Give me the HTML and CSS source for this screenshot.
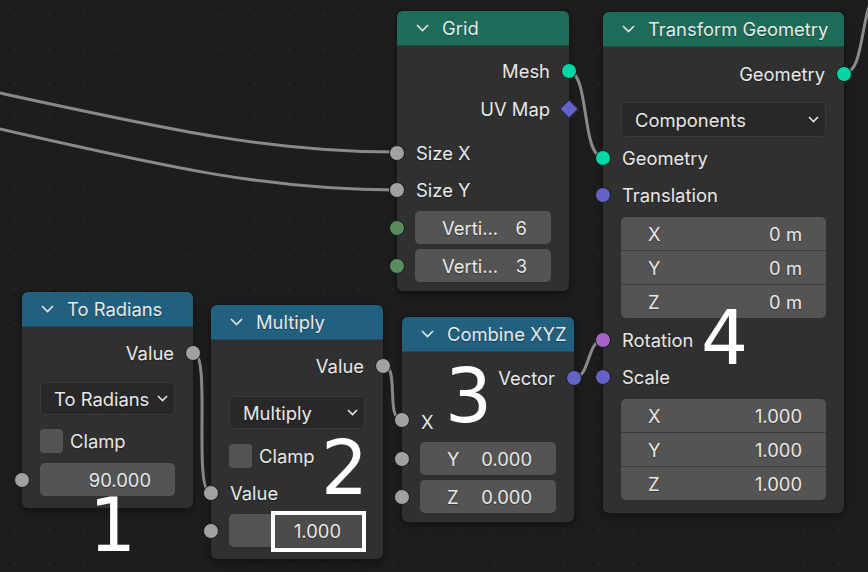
FILE: index.html
```html
<!DOCTYPE html>
<html>
<head>
<meta charset="utf-8">
<link rel="stylesheet" href="styles.css">
</head>
<body>
<div class="canvas">
  <svg class="wires" viewBox="0 0 868 572" width="868" height="572">
    <path d="M0 93 C170 130 270 152 396 152"/>
    <path d="M0 129 C170 168 270 190 396 190"/>
    <path d="M568 71 C590 71 581 157 603 157"/>
    <path d="M844 73 C866 73 858 10 880 -15"/>
    <path d="M193 352 C212 352 192 493 211 493"/>
    <path d="M383 365 C400 365 385 420 402 420"/>
    <path d="M574 378 C590 378 587 340 603 340"/>
  </svg>

  <!-- Grid -->
  <div class="node n-grid">
    <div class="hdr teal"><svg class="chev" viewBox="0 0 13 8"><polyline points="1,1 6.5,6.5 12,1"/></svg><span>Grid</span></div>
    <div class="body pt6 pb9">
      <div class="row out">Mesh<span class="sock geo"></span></div>
      <div class="row out mt1">UV Map<span class="diamond"></span></div>
      <div class="row in mt7"><span class="sock flt"></span>Size X</div>
      <div class="row in"><span class="sock flt"></span>Size Y</div>
      <div class="field mt3"><span class="sock int"></span><span>Verti...</span><span>6</span></div>
      <div class="field mt5"><span class="sock int"></span><span>Verti...</span><span>3</span></div>
    </div>
  </div>

  <!-- Transform Geometry -->
  <div class="node n-xform">
    <div class="hdr teal"><svg class="chev" viewBox="0 0 13 8"><polyline points="1,1 6.5,6.5 12,1"/></svg><span>Transform Geometry</span></div>
    <div class="body pt8 pb13">
      <div class="row out">Geometry<span class="sock geo"></span></div>
      <div class="dd tall mt10"><span>Components</span><svg class="ddchev" viewBox="0 0 11 7"><polyline points="1,1 5.5,5.5 10,1"/></svg></div>
      <div class="row in mt2"><span class="sock geo"></span>Geometry</div>
      <div class="row in"><span class="sock vec"></span>Translation</div>
      <div class="vbox mt4">
        <div class="vr"><span>X</span><span>0 m</span></div>
        <div class="vr"><span>Y</span><span>0 m</span></div>
        <div class="vr"><span>Z</span><span>0 m</span></div>
      </div>
      <div class="row in mt3"><span class="sock rot"></span>Rotation</div>
      <div class="row in"><span class="sock vec"></span>Scale</div>
      <div class="vbox mt4">
        <div class="vr"><span>X</span><span>1.000</span></div>
        <div class="vr"><span>Y</span><span>1.000</span></div>
        <div class="vr"><span>Z</span><span>1.000</span></div>
      </div>
    </div>
  </div>

  <!-- To Radians -->
  <div class="node n-rad">
    <div class="hdr blue"><svg class="chev" viewBox="0 0 13 8"><polyline points="1,1 6.5,6.5 12,1"/></svg><span>To Radians</span></div>
    <div class="body pt7 pb12">
      <div class="row out">Value<span class="sock flt"></span></div>
      <div class="dd mt11"><span>To Radians</span><svg class="ddchev" viewBox="0 0 11 7"><polyline points="1,1 5.5,5.5 10,1"/></svg></div>
      <div class="chk mt7"><span class="box"></span><span>Clamp</span></div>
      <div class="field right mt4"><span class="sock flt"></span><span>90.000</span></div>
    </div>
  </div>

  <!-- Multiply -->
  <div class="node n-mul">
    <div class="hdr blue"><svg class="chev" viewBox="0 0 13 8"><polyline points="1,1 6.5,6.5 12,1"/></svg><span>Multiply</span></div>
    <div class="body pt7 pb12">
      <div class="row out">Value<span class="sock flt"></span></div>
      <div class="dd mt12"><span>Multiply</span><svg class="ddchev" viewBox="0 0 11 7"><polyline points="1,1 5.5,5.5 10,1"/></svg></div>
      <div class="chk mt8"><span class="box"></span><span>Clamp</span></div>
      <div class="row in"><span class="sock flt"></span>Value</div>
      <div class="field right mt3"><span class="sock flt"></span><span class="hl"></span><span class="val">1.000</span></div>
    </div>
  </div>

  <!-- Combine XYZ -->
  <div class="node n-comb">
    <div class="hdr blue"><svg class="chev" viewBox="0 0 13 8"><polyline points="1,1 6.5,6.5 12,1"/></svg><span>Combine XYZ</span></div>
    <div class="body pt7 pb9">
      <div class="row out">Vector<span class="sock vec"></span></div>
      <div class="row in low mt5"><span class="sock flt"></span>X</div>
      <div class="field mt4"><span class="sock flt"></span><span>Y</span><span>0.000</span></div>
      <div class="field mt5"><span class="sock flt"></span><span>Z</span><span>0.000</span></div>
    </div>
  </div>

  <div class="num n1">1</div>
  <div class="num n2">2</div>
  <div class="num n3">3</div>
  <div class="num n4">4</div>
</div>
</body>
</html>
```

FILE: styles.css
```css
* { box-sizing: border-box; margin: 0; padding: 0; }
html, body { width: 868px; height: 572px; overflow: hidden; }
body {
  background: #1d1d1d;
  font-family: Inter, "DejaVu Sans", sans-serif;
  font-size: 18.4px;
  color: #e8e8e8;
}
.canvas {
  position: relative;
  width: 868px;
  height: 572px;
  overflow: hidden;
  background-color: #1d1d1d;
  background-image: radial-gradient(circle, #2a2a2a 0.8px, transparent 1.3px);
  background-size: 34.33px 34.33px;
  background-position: -2.2px -2.2px;
}
.wires { position: absolute; left: 0; top: 0; }
.wires path { fill: none; stroke: #8a8a8a; stroke-width: 3; stroke-linecap: round; }

.node {
  position: absolute;
  background: #303030;
  border-radius: 6px;
  box-shadow: 0 0 0 1px #161616, 0 3px 8px rgba(0, 0, 0, 0.45);
  text-shadow: 0 1px 1px rgba(0, 0, 0, 0.35);
}
.n-grid { left: 397px; top: 11px; width: 172px; }
.n-xform { left: 603px; top: 12px; width: 241px; }
.n-rad { left: 22px; top: 292px; width: 171px; }
.n-mul { left: 211px; top: 305px; width: 172px; }
.n-comb { left: 402px; top: 317px; width: 172px; }

.hdr {
  height: 35px;
  display: flex;
  align-items: center;
  gap: 13px;
  padding-left: 19px;
  border-radius: 6px 6px 0 0;
  border-bottom: 1px solid rgba(0, 0, 0, 0.22);
  white-space: nowrap;
}
.hdr.teal { background: #1d6b58; }
.hdr.blue { background: #21607f; }
.chev { width: 13px; height: 8px; flex: none; }
.chev polyline, .ddchev polyline { fill: none; stroke: #e6e6e6; stroke-width: 1.6; }

.body { padding-left: 18px; padding-right: 18px; display: flex; flex-direction: column; }
.pt6 { padding-top: 6px; } .pt7 { padding-top: 7px; } .pt8 { padding-top: 8px; }
.pb9 { padding-bottom: 9px; } .pb12 { padding-bottom: 12px; } .pb13 { padding-bottom: 13px; }
.mt1 { margin-top: 1px; } .mt2 { margin-top: 2px; } .mt3 { margin-top: 3px; } .mt4 { margin-top: 4px; }
.mt5 { margin-top: 5px; } .mt7 { margin-top: 7px; } .mt8 { margin-top: 8px; } .mt10 { margin-top: 10px; }
.mt11 { margin-top: 11px; } .mt12 { margin-top: 12px; }

.row {
  position: relative;
  height: 37px;
  display: flex;
  align-items: center;
  margin-left: -18px;
  margin-right: -18px;
  padding: 0 19px;
  white-space: nowrap;
}
.row.out { justify-content: flex-end; }
.row.low { padding-top: 5px; }

.sock {
  position: absolute;
  width: 16px;
  height: 16px;
  border-radius: 50%;
  border: 1px solid #1a1a1a;
  top: 50%;
  margin-top: -8px;
}
.row.out .sock { right: -8px; }
.row.in .sock { left: -8px; }
.geo { background: #00d6a3; }
.flt { background: #a1a1a1; }
.int { background: #598c5c; }
.vec { background: #6363c7; }
.rot { background: #a563c7; }
.diamond {
  position: absolute;
  right: -7px;
  top: 50%;
  width: 14px;
  height: 14px;
  margin-top: -7px;
  background: #6363c7;
  border: 1px solid #1a1a1a;
  transform: rotate(45deg);
}

.field {
  position: relative;
  height: 33px;
  background: #545454;
  border-radius: 5px;
  display: flex;
  align-items: center;
  justify-content: space-between;
  padding: 0 24px 0 27px;
  white-space: nowrap;
}
.field.right { justify-content: flex-end; }
.field .sock { left: -26px; }
.hl {
  position: absolute;
  left: 42px;
  top: -3px;
  width: 95px;
  height: 41px;
  border: 4px solid #ffffff;
  background: #4b4b4b;
}
.val { position: relative; }

.dd {
  height: 33px;
  background: #282828;
  border: 1px solid #3a3a3a;
  border-radius: 5px;
  display: flex;
  align-items: center;
  justify-content: space-between;
  padding: 0 6px 0 13px;
  white-space: nowrap;
}
.dd.tall { height: 35px; }
.ddchev { width: 11px; height: 7px; flex: none; }

.chk { height: 37px; display: flex; align-items: center; gap: 7px; }
.box { width: 23px; height: 24px; background: #545454; border-radius: 4px; flex: none; }

.vbox {
  height: 101px;
  background: #545454;
  border-radius: 5px;
  overflow: hidden;
  display: flex;
  flex-direction: column;
}
.vr {
  flex: 1;
  display: flex;
  align-items: center;
  justify-content: space-between;
  padding: 0 24px 0 27px;
}
.vr + .vr { border-top: 1px solid #3c3c3c; }

.num {
  position: absolute;
  font-family: "DejaVu Sans", sans-serif;
  font-size: 74px;
  line-height: 0.75;
  color: #ffffff;
}
.n1 { left: 89px; top: 498px; }
.n2 { left: 321px; top: 441px; }
.n3 { left: 445px; top: 369px; }
.n4 { left: 701px; top: 311px; }
```
